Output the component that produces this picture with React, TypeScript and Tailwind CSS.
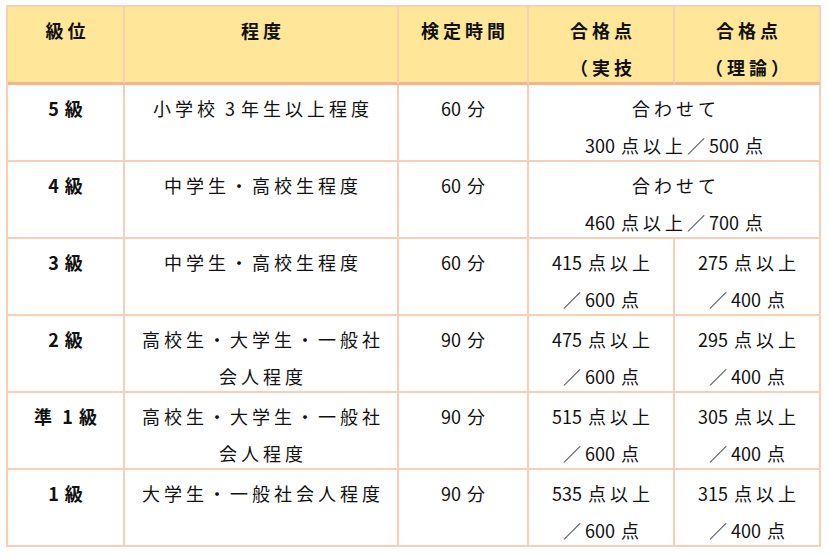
import React from "react";

function T({ s }: { s: string }) {
  const parts = s.split(/([0-9]+| )/);
  return (
    <>
      {parts.map((p, i) =>
        /^[0-9]+$/.test(p) ? (
          <span key={i} className="tracking-normal">
            {p}
          </span>
        ) : p === " " ? (
          <span key={i} className="tracking-[2px]">
            {" "}
          </span>
        ) : (
          <React.Fragment key={i}>{p}</React.Fragment>
        )
      )}
    </>
  );
}

const cell =
  "border-r-2 border-b-2 border-[#F8CFB4] text-center pt-[5px] pl-[4px] leading-[37px] tracking-[4px] whitespace-nowrap";
const head =
  "border-r-2 border-b-[3px] border-r-[#F8CFB4] border-b-[#F5B48A] bg-[#FFE699] text-center pt-[5px] pl-[4px] leading-[37px] tracking-[4px] font-bold whitespace-nowrap";

type Row = {
  grade: string;
  level: string[];
  time: string;
  merged?: string[];
  a?: string[];
  b?: string[];
};

const rows: Row[] = [
  { grade: "5 級", level: ["小学校 3 年生以上程度"], time: "60 分", merged: ["合わせて", "300 点以上／500 点"] },
  { grade: "4 級", level: ["中学生・高校生程度"], time: "60 分", merged: ["合わせて", "460 点以上／700 点"] },
  { grade: "3 級", level: ["中学生・高校生程度"], time: "60 分", a: ["415 点以上", "／600 点"], b: ["275 点以上", "／400 点"] },
  { grade: "2 級", level: ["高校生・大学生・一般社", "会人程度"], time: "90 分", a: ["475 点以上", "／600 点"], b: ["295 点以上", "／400 点"] },
  { grade: "準 1 級", level: ["高校生・大学生・一般社", "会人程度"], time: "90 分", a: ["515 点以上", "／600 点"], b: ["305 点以上", "／400 点"] },
  { grade: "1 級", level: ["大学生・一般社会人程度"], time: "90 分", a: ["535 点以上", "／600 点"], b: ["315 点以上", "／400 点"] },
];

function Lines({ lines }: { lines: string[] }) {
  return (
    <>
      {lines.map((l, i) => (
        <div key={i}>
          <T s={l} />
        </div>
      ))}
    </>
  );
}

export default function App() {
  return (
    <div className="w-[829px] h-[558px] bg-white pt-[5px] pl-[6px] font-['Noto_Sans_CJK_JP','Liberation_Sans',sans-serif] text-[18px] text-[#111111]">
      <div className="grid w-[815px] grid-cols-[117px_274px_130px_146px_146px] grid-rows-[78px_repeat(6,77px)] border-t-2 border-l-2 border-[#F8CFB4]">
        <div className={head}>級位</div>
        <div className={head}>程度</div>
        <div className={head}>検定時間</div>
        <div className={head}>
          <div>合格点</div>
          <div>（実技</div>
        </div>
        <div className={head}>
          <div>合格点</div>
          <div>（理論）</div>
        </div>
        {rows.map((r, i) => (
          <React.Fragment key={i}>
            <div className={cell + " font-bold"}>
              <T s={r.grade} />
            </div>
            <div className={cell}>
              <Lines lines={r.level} />
            </div>
            <div className={cell}>
              <T s={r.time} />
            </div>
            {r.merged ? (
              <div className={cell + " col-span-2"}>
                <Lines lines={r.merged} />
              </div>
            ) : (
              <>
                <div className={cell}>
                  <Lines lines={r.a!} />
                </div>
                <div className={cell}>
                  <Lines lines={r.b!} />
                </div>
              </>
            )}
          </React.Fragment>
        ))}
      </div>
    </div>
  );
}
